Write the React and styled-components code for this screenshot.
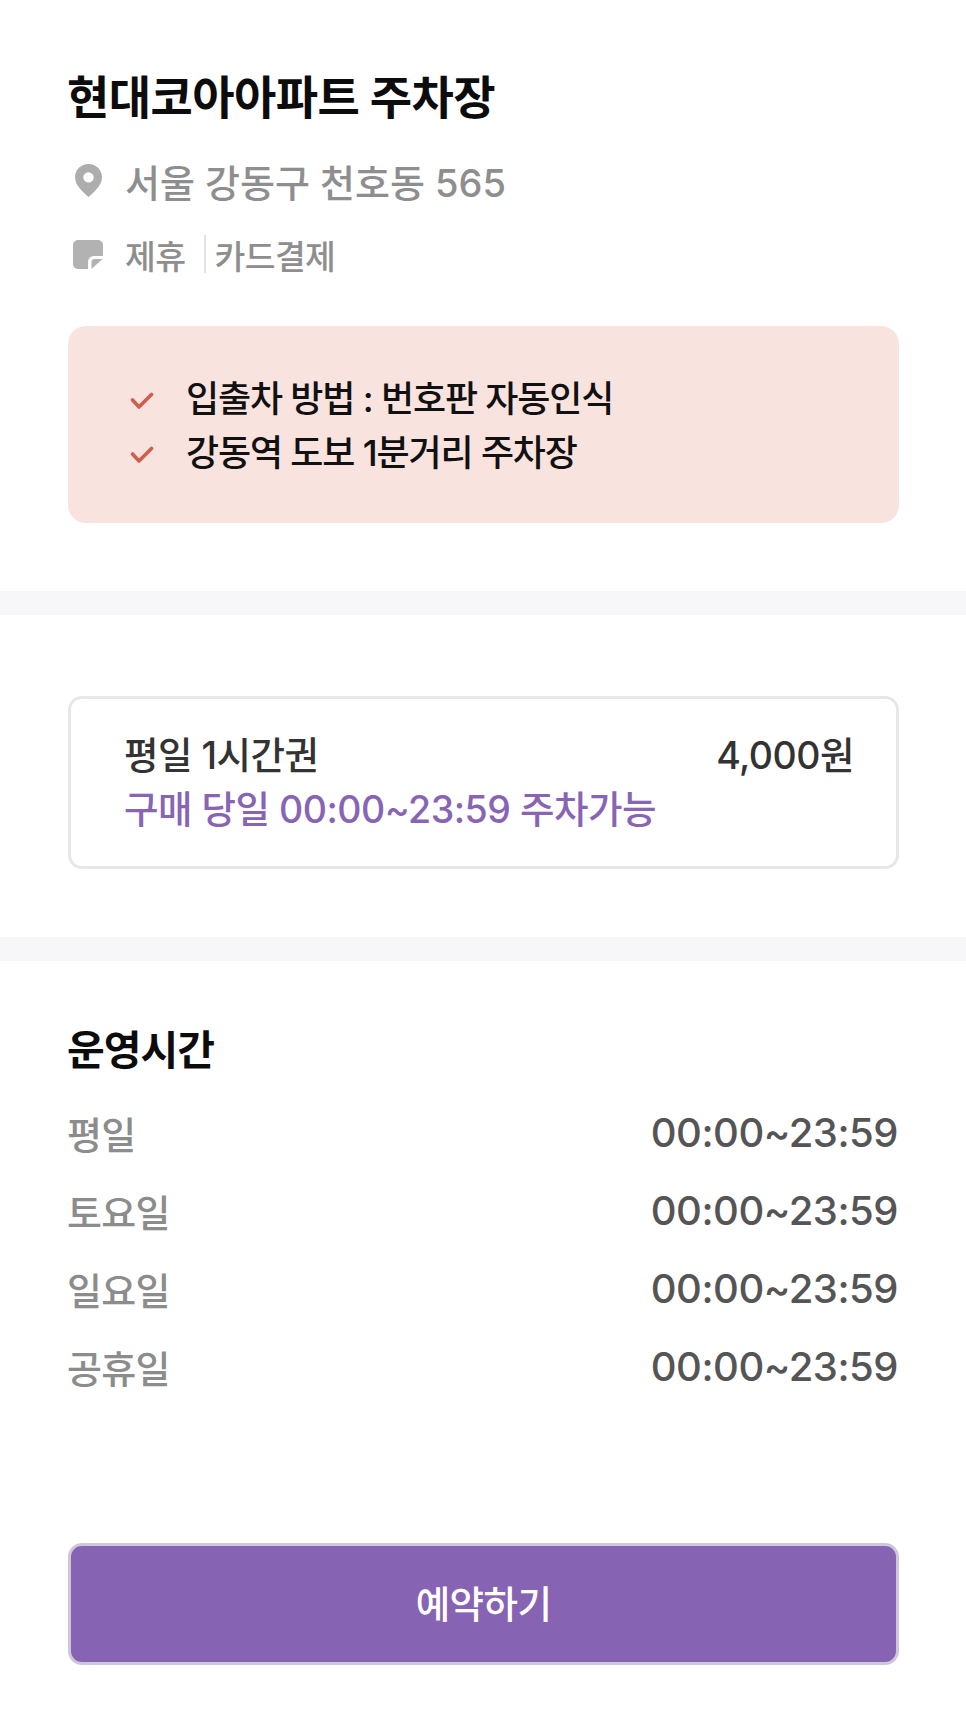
import React from 'react'
import styled, { createGlobalStyle } from 'styled-components'

const GlobalStyle = createGlobalStyle`
  html, body {
    margin: 0;
    background: #fff;
  }
  body {
    font-family: Inter, "Noto Sans CJK KR", sans-serif;
  }
`

const Page = styled.div`
  width: 966px;
  height: 1712px;
  overflow: hidden;
  background: #fff;
`
const Section = styled.section`
  padding: ${(props) => props.$padding};
`
const Divider = styled.div`
  height: 24px;
  background: #f7f7f9;
`
const Title = styled.h1`
  margin: 0 0 0 -1px;
  font-size: 46px;
  line-height: 60px;
  font-weight: 700;
  letter-spacing: -0.55px;
  color: #0c0c0c;
`
const InfoRow = styled.div`
  display: flex;
  align-items: center;
  height: ${(props) => props.$height}px;
  margin-top: ${(props) => props.$top}px;
  font-size: ${(props) => props.$size}px;
  font-weight: 500;
  color: #8e8e8e;
`
const IconSlot = styled.span`
  display: flex;
  flex: none;
  width: 57px;
  padding-left: ${(props) => props.$inset}px;
  box-sizing: border-box;
`
const Tag = styled.span`
  letter-spacing: -0.6px;
`
const TagSeparator = styled.span`
  width: 2px;
  height: 38px;
  margin: 0 8px 0 19px;
  background: #e2e2e2;
`
const NoticeCard = styled.ul`
  list-style: none;
  margin: 50px 0 0;
  padding: 43px 60px 0 62px;
  height: 197px;
  box-sizing: border-box;
  background: #f8e3df;
  border-radius: 18px;
`
const NoticeItem = styled.li`
  display: flex;
  align-items: center;
  gap: 32px;
  height: 54px;
  font-size: 36px;
  font-weight: 500;
  letter-spacing: -1.15px;
  color: #111;
`
const CheckMark = styled.svg`
  flex: none;
  margin-top: 9px;
`
const TicketCard = styled.div`
  height: 173px;
  box-sizing: border-box;
  padding: 26px 42px 0 53px;
  border: 3px solid #e7e7e9;
  border-radius: 14px;
  background: #fff;
`
const TicketTop = styled.div`
  display: flex;
  justify-content: space-between;
  align-items: center;
  height: 54px;
  font-size: 37.500px;
  font-weight: 500;
  letter-spacing: -0.5px;
  color: #333;
`
const TicketNote = styled.div`
  height: 61px;
  line-height: 61px;
  font-size: 37.500px;
  font-weight: 500;
  letter-spacing: -0.5px;
  color: #8765b4;
`
const SectionTitle = styled.h2`
  margin: 0 0 13px -1px;
  font-size: 41px;
  line-height: 60px;
  font-weight: 700;
  letter-spacing: -1px;
  color: #0c0c0c;
`
const HoursRow = styled.div`
  display: flex;
  justify-content: space-between;
  align-items: center;
  height: 78px;
  margin: 0 1px 0 -1px;
  font-weight: 500;
`
const HoursDay = styled.span`
  font-size: 38px;
  color: #8c8c8c;
  letter-spacing: -0.7px;
`
const HoursTime = styled.span`
  font-size: 40px;
  color: #555;
  letter-spacing: -0.5px;
`
const ReserveButton = styled.button`
  display: block;
  width: 100%;
  height: 122px;
  margin-top: 138px;
  padding: 0 0 6px;
  border: 3px solid #cfc6db;
  border-radius: 14px;
  background: #8763b3;
  color: #fff;
  font-family: inherit;
  font-size: 37.500px;
  font-weight: 500;
  letter-spacing: -0.6px;
`

const PinIcon = () => (
  <svg width="27" height="33" viewBox="0 0 27 33">
    <path
      fill="#adadad"
      fillRule="evenodd"
      d="M13.500 0C6 0 0 5.700 0 13.200 0 21.500 8.500 28.500 13.500 33 18.500 28.500 27 21.500 27 13.200 27 5.700 21 0 13.500 0Zm0 8.200a5.200 5.200 0 1 1 0 10.400 5.200 5.200 0 0 1 0-10.400Z"
    />
  </svg>
)

const NoteIcon = () => (
  <svg width="30" height="29" viewBox="0 0 30 29">
    <path
      fill="#b2b2b2"
      d="M5 0h20a5 5 0 0 1 5 5v11h-9a6 6 0 0 0-6 6v7H5a5 5 0 0 1-5-5V5a5 5 0 0 1 5-5Z"
    />
    <path fill="#b2b2b2" d="M18.500 29v-7a3 3 0 0 1 3-3h8L18.500 29Z" />
  </svg>
)

const CheckIcon = () => (
  <CheckMark width="24" height="20" viewBox="0 0 24 20">
    <path
      d="M2.500 9 9 16 21.500 3.500"
      fill="none"
      stroke="#cd5f4e"
      strokeWidth="3.600"
      strokeLinecap="round"
      strokeLinejoin="round"
    />
  </CheckMark>
)

const notices = ['입출차 방법 : 번호판 자동인식', '강동역 도보 1분거리 주차장']
const hours = ['평일', '토요일', '일요일', '공휴일']

const App = () => {
  return (
    <Page>
      <GlobalStyle />
      <Section $padding="67px 67px 68px 68px">
        <Title>현대코아아파트 주차장</Title>
        <InfoRow $height={60} $top={23} $size={38}>
          <IconSlot $inset={7}><PinIcon /></IconSlot>
          서울 강동구 천호동 565
        </InfoRow>
        <InfoRow $height={44} $top={22} $size={33.5}>
          <IconSlot $inset={5}><NoteIcon /></IconSlot>
          <Tag>제휴</Tag>
          <TagSeparator />
          <Tag>카드결제</Tag>
        </InfoRow>
        <NoticeCard>
          {notices.map((notice) => (
            <NoticeItem key={notice}>
              <CheckIcon />
              {notice}
            </NoticeItem>
          ))}
        </NoticeCard>
      </Section>
      <Divider />
      <Section $padding="81px 67px 68px 68px">
        <TicketCard>
          <TicketTop>
            <span>평일 1시간권</span>
            <span>4,000원</span>
          </TicketTop>
          <TicketNote>구매 당일 00:00~23:59 주차가능</TicketNote>
        </TicketCard>
      </Section>
      <Divider />
      <Section $padding="59px 67px 0 68px">
        <SectionTitle>운영시간</SectionTitle>
        {hours.map((day) => (
          <HoursRow key={day}>
            <HoursDay>{day}</HoursDay>
            <HoursTime>00:00~23:59</HoursTime>
          </HoursRow>
        ))}
        <ReserveButton>예약하기</ReserveButton>
      </Section>
    </Page>
  )
}

export default App
